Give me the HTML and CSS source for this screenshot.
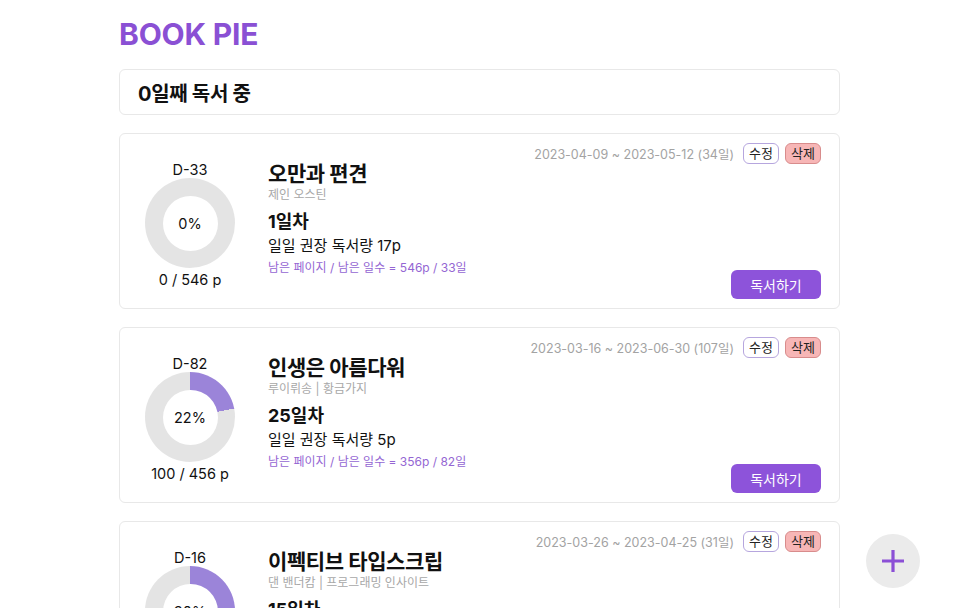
FILE: index.html
```html
<!DOCTYPE html>
<html lang="ko">
<head>
<meta charset="utf-8">
<title>BOOK PIE</title>
<link rel="stylesheet" href="styles.css">
</head>
<body>
<div class="page">
  <h1 class="logo">BOOK PIE</h1>
  <div class="status">0일째 독서 중</div>

  <div class="card">
    <div class="progress">
      <div class="dday">D-33</div>
      <div class="donut" style="--p: 0%"><div class="hole">0%</div></div>
      <div class="pages">0 / 546 p</div>
    </div>
    <div class="info">
      <div class="title">오만과 편견</div>
      <div class="author">제인 오스틴</div>
      <div class="day">1일차</div>
      <div class="daily">일일 권장 독서량 17p</div>
      <div class="remain">남은 페이지 / 남은 일수 = 546p / 33일</div>
    </div>
    <div class="side">
      <div class="meta">
        <span class="period">2023-04-09 ~ 2023-05-12 (34일)</span>
        <button class="btn-edit">수정</button>
        <button class="btn-del">삭제</button>
      </div>
      <button class="btn-read">독서하기</button>
    </div>
  </div>

  <div class="card">
    <div class="progress">
      <div class="dday">D-82</div>
      <div class="donut" style="--p: 22%"><div class="hole">22%</div></div>
      <div class="pages">100 / 456 p</div>
    </div>
    <div class="info">
      <div class="title">인생은 아름다워</div>
      <div class="author">루이뤼송 | 황금가지</div>
      <div class="day">25일차</div>
      <div class="daily">일일 권장 독서량 5p</div>
      <div class="remain">남은 페이지 / 남은 일수 = 356p / 82일</div>
    </div>
    <div class="side">
      <div class="meta">
        <span class="period">2023-03-16 ~ 2023-06-30 (107일)</span>
        <button class="btn-edit">수정</button>
        <button class="btn-del">삭제</button>
      </div>
      <button class="btn-read">독서하기</button>
    </div>
  </div>

  <div class="card">
    <div class="progress">
      <div class="dday">D-16</div>
      <div class="donut" style="--p: 30%"><div class="hole">30%</div></div>
      <div class="pages">120 / 400 p</div>
    </div>
    <div class="info">
      <div class="title">이펙티브 타입스크립</div>
      <div class="author">댄 밴더캄 | 프로그래밍 인사이트</div>
      <div class="day">15일차</div>
      <div class="daily">일일 권장 독서량 17p</div>
      <div class="remain">남은 페이지 / 남은 일수 = 280p / 16일</div>
    </div>
    <div class="side">
      <div class="meta">
        <span class="period">2023-03-26 ~ 2023-04-25 (31일)</span>
        <button class="btn-edit">수정</button>
        <button class="btn-del">삭제</button>
      </div>
      <button class="btn-read">독서하기</button>
    </div>
  </div>
</div>

<button class="fab" aria-label="추가">
  <svg width="24" height="24" viewBox="0 0 24 24"><path d="M12 1v22M1 12h22" stroke="#8b4fd6" stroke-width="3.2" fill="none"/></svg>
</button>
</body>
</html>
```

FILE: styles.css
```css
* { box-sizing: border-box; }
html, body { margin: 0; padding: 0; background: #fff; }
body {
  font-family: "Inter", "Noto Sans CJK KR", sans-serif;
  color: #111;
  overflow: hidden;
}
.page {
  width: 721px;
  margin-left: 119px;
  padding-top: 16px;
}
.logo {
  margin: 0;
  font-size: 30px;
  line-height: 36px;
  font-weight: 700;
  color: #8a50d4;
  letter-spacing: -0.2px;
}
.status {
  margin-top: 17px;
  height: 46px;
  border: 1px solid #e8e8e8;
  border-radius: 6px;
  padding: 0 18px;
  display: flex;
  align-items: center;
  font-size: 20px;
  font-weight: 700;
  letter-spacing: -0.3px;
}
.card {
  margin-top: 18px;
  border: 1px solid #e8e8e8;
  border-radius: 6px;
  height: 176px;
  padding: 9px 18px 9px 24px;
  display: flex;
}
.progress {
  width: 92px;
  padding-top: 19px;
  display: flex;
  flex-direction: column;
  align-items: center;
  flex-shrink: 0;
}
.dday, .pages {
  font-size: 14.5px;
  line-height: 16px;
  white-space: nowrap;
}
.donut {
  width: 90px;
  height: 90px;
  border-radius: 50%;
  background: conic-gradient(#9b84d9 0 var(--p), #e4e4e4 var(--p) 100%);
  display: flex;
  align-items: center;
  justify-content: center;
  flex-shrink: 0;
}
.hole {
  width: 55px;
  height: 55px;
  border-radius: 50%;
  background: #fff;
  display: flex;
  align-items: center;
  justify-content: center;
  font-size: 14.5px;
}
.pages { margin-top: 4px; }
.info {
  margin-left: 32px;
  padding-top: 18px;
  flex: 1;
  display: flex;
  flex-direction: column;
}
.title {
  font-size: 21px;
  line-height: 26px;
  font-weight: 700;
  letter-spacing: -0.4px;
}
.author {
  font-size: 12px;
  line-height: 16px;
  color: #a8a8a8;
}
.day {
  margin-top: 7px;
  font-size: 18px;
  line-height: 24px;
  font-weight: 700;
}
.daily {
  margin-top: 2px;
  font-size: 15px;
  line-height: 20px;
}
.remain {
  margin-top: 4px;
  font-size: 12px;
  line-height: 16px;
  color: #9466d3;
}
.side {
  display: flex;
  flex-direction: column;
  justify-content: space-between;
  align-items: flex-end;
}
.meta {
  display: flex;
  align-items: center;
  height: 21px;
  white-space: nowrap;
}
.period {
  font-size: 12.5px;
  color: #a3a3a3;
  margin-right: 9px;
}
.meta button {
  font-family: inherit;
  width: 36px;
  height: 21px;
  padding: 0;
  border-radius: 6px;
  font-size: 13px;
  line-height: 19px;
  color: #222;
  cursor: pointer;
}
.btn-edit {
  background: #fff;
  border: 1px solid #b6a6de;
}
.btn-del {
  margin-left: 6px;
  background: #f7b6b6;
  border: 1px solid #d88c8c;
}
.btn-read {
  font-family: inherit;
  width: 90px;
  height: 29px;
  border: 0;
  border-radius: 6px;
  background: #8d53da;
  color: #fff;
  font-size: 14px;
  cursor: pointer;
}
.fab {
  position: fixed;
  left: 866px;
  top: 534px;
  width: 54px;
  height: 54px;
  border-radius: 50%;
  border: 0;
  background: #ebebeb;
  display: flex;
  align-items: center;
  justify-content: center;
  padding: 0;
}
```
